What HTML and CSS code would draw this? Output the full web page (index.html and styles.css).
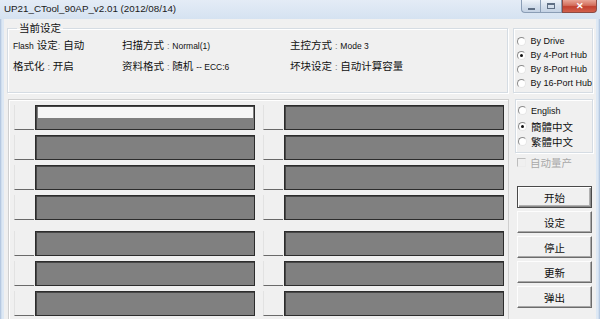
FILE: index.html
```html
<!DOCTYPE html>
<html lang="zh-CN">
<head>
<meta charset="utf-8">
<title>UP21_CTool_90AP_v2.01</title>
<link rel="stylesheet" href="styles.css">
</head>
<body>
<div class="window">
  <div class="titlebar">
    <span class="title">UP21_CTool_90AP_v2.01 (2012/08/14)</span>
    <div class="controls">
      <span class="ctl min"><i class="min-glyph"></i></span>
      <span class="ctl max"><i class="max-glyph"></i></span>
      <span class="ctl close">✕</span>
    </div>
  </div>
  <div class="client">
    <div class="top">
      <fieldset class="settings">
        <legend>当前设定</legend>
        <div class="info">
          <span><span class="l">Flash</span> 设定<span class="sep">:</span> 自动</span>
          <span>扫描方式 <span class="sep">:</span> <span class="l">Normal(1)</span></span>
          <span>主控方式 <span class="sep">:</span> <span class="l">Mode 3</span></span>
          <span>格式化 <span class="sep">:</span> 开启</span>
          <span>资料格式 <span class="sep">:</span> 随机 <span class="l">-- ECC:6</span></span>
          <span>坏块设定 <span class="sep">:</span> 自动计算容量</span>
        </div>
      </fieldset>
      <div class="box mode">
        <label class="radio"><i class="dot"></i><span class="l">By Drive</span></label>
        <label class="radio"><i class="dot on"></i><span class="l">By 4-Port Hub</span></label>
        <label class="radio"><i class="dot"></i><span class="l">By 8-Port Hub</span></label>
        <label class="radio"><i class="dot"></i><span class="l">By 16-Port Hub</span></label>
      </div>
    </div>
    <div class="bottom">
      <div class="ports">
        <div class="bank">
          <div class="row">
            <div class="cell"><span class="pbtn"></span><div class="bar"><div class="fill"></div></div></div>
            <div class="cell"><span class="pbtn"></span><div class="bar"></div></div>
          </div>
          <div class="row">
            <div class="cell"><span class="pbtn"></span><div class="bar"></div></div>
            <div class="cell"><span class="pbtn"></span><div class="bar"></div></div>
          </div>
          <div class="row">
            <div class="cell"><span class="pbtn"></span><div class="bar"></div></div>
            <div class="cell"><span class="pbtn"></span><div class="bar"></div></div>
          </div>
          <div class="row">
            <div class="cell"><span class="pbtn"></span><div class="bar"></div></div>
            <div class="cell"><span class="pbtn"></span><div class="bar"></div></div>
          </div>
        </div>
        <div class="bank">
          <div class="row">
            <div class="cell"><span class="pbtn"></span><div class="bar"></div></div>
            <div class="cell"><span class="pbtn"></span><div class="bar"></div></div>
          </div>
          <div class="row">
            <div class="cell"><span class="pbtn"></span><div class="bar"></div></div>
            <div class="cell"><span class="pbtn"></span><div class="bar"></div></div>
          </div>
          <div class="row">
            <div class="cell"><span class="pbtn"></span><div class="bar"></div></div>
            <div class="cell"><span class="pbtn"></span><div class="bar"></div></div>
          </div>
          <div class="row">
            <div class="cell"><span class="pbtn"></span><div class="bar"></div></div>
            <div class="cell"><span class="pbtn"></span><div class="bar"></div></div>
          </div>
        </div>
      </div>
      <div class="side">
        <div class="box lang">
          <label class="radio"><i class="dot"></i><span class="l">English</span></label>
          <label class="radio"><i class="dot on"></i><span class="c">簡體中文</span></label>
          <label class="radio"><i class="dot"></i><span class="c">繁體中文</span></label>
        </div>
        <label class="check"><i class="cbox"></i><span>自动量产</span></label>
        <div class="buttons">
          <button class="btn default">开始</button>
          <button class="btn">设定</button>
          <button class="btn">停止</button>
          <button class="btn">更新</button>
          <button class="btn">弹出</button>
        </div>
      </div>
    </div>
  </div>
</div>
</body>
</html>
```
FILE: styles.css
```css
* { box-sizing: border-box; }
html, body { margin: 0; padding: 0; }
body {
  width: 600px;
  height: 319px;
  overflow: hidden;
  background: #dbe6f3;
  font-family: "Liberation Sans", "Noto Sans CJK SC", sans-serif;
  font-size: 10px;
  color: #111;
}
.window {
  height: 319px;
  display: flex;
  flex-direction: column;
  background: linear-gradient(90deg, #a9bfdb 0, #dde8f4 2px, #dde8f4 598px, #a9bfdb 600px);
}
.titlebar {
  height: 19px;
  flex: none;
  display: flex;
  justify-content: space-between;
  align-items: flex-start;
  background: linear-gradient(#e4ecf6, #d5e2f1);
}
.title {
  font-family: "Liberation Sans", sans-serif;
  font-size: 9.8px;
  line-height: 17px;
  padding-left: 4px;
  color: #1a1a1a;
}
.controls {
  display: flex;
  margin-right: 3px;
}
.ctl {
  height: 13px;
  display: flex;
  align-items: center;
  justify-content: center;
  border: 1px solid #8a9db5;
  border-top: none;
  background: linear-gradient(#eef3f9, #d3deeb 55%, #c4d2e4);
}
.min { width: 19px; border-radius: 0 0 0 4px; border-right: none; }
.max { width: 22px; }
.close {
  width: 35px;
  border-color: #8d4b43;
  border-radius: 0 0 4px 0;
  background: linear-gradient(#e9a697, #d36e5c 45%, #c2412f 55%, #d2604c);
  color: #fff;
  font-size: 9px;
  font-weight: bold;
}
.min-glyph { width: 7px; height: 2px; border: 1px solid #5f6f84; margin-top: 5px; display: block; }
.max-glyph { width: 8px; height: 6px; border: 1px solid #5f6f84; border-top-width: 2px; display: block; }

.client {
  flex: 1;
  margin: 0 4px;
  padding: 3px 3px 0 3px;
  background: #f0f0f0;
  overflow: hidden;
}
.top {
  display: flex;
  gap: 5px;
}
.settings {
  width: 502px;
  height: 71px;
  margin: 0;
  padding: 0 0 0 5px;
  border: 1px solid #d5dce3;
  box-shadow: inset 1px 1px 0 #fff, 1px 1px 0 #fff;
  min-inline-size: 0;
}
.settings legend {
  font-size: 10.5px;
  line-height: 12px;
  padding: 0 2px;
  margin-left: 4px;
}
.info {
  display: grid;
  grid-template-columns: 109px 168px auto;
  grid-auto-rows: 21px;
  align-items: center;
  font-size: 10.5px;
  white-space: nowrap;
}
.l { font-size: 8.5px; }
.sep { color: #777; font-size: 9px; }

.box {
  border: 1px solid #d5dce3;
  box-shadow: inset 1px 1px 0 #fff, 1px 1px 0 #fff;
}
.mode {
  flex: 1;
  margin-top: 6px;
  height: 65px;
  padding: 5px 0 0 3px;
}
.radio {
  display: flex;
  align-items: center;
  height: 14px;
  white-space: nowrap;
}
.radio .l { font-size: 9px; }
.dot {
  width: 9px;
  height: 9px;
  flex: none;
  border-radius: 50%;
  background: #fff;
  border: 1px solid;
  border-color: #8c8c8c #e6e6e6 #e6e6e6 #8c8c8c;
  margin-right: 4px;
  position: relative;
}
.dot.on::after {
  content: "";
  position: absolute;
  left: 2px;
  top: 2px;
  width: 3px;
  height: 3px;
  border-radius: 50%;
  background: #111;
}

.bottom {
  display: flex;
  margin-top: 6px;
}
.ports {
  width: 501px;
  height: 240px;
  margin-left: 1px;
  border: 1px solid #cfcfcf;
  border-bottom: none;
  box-shadow: inset 1px 1px 0 #fff;
  padding: 5px 0 0 5px;
  display: flex;
  flex-direction: column;
  gap: 11px;
}
.bank {
  display: flex;
  flex-direction: column;
  gap: 5px;
}
.row {
  display: flex;
  gap: 8px;
  height: 25px;
}
.cell {
  display: flex;
  gap: 1px;
}
.pbtn {
  width: 20px;
  height: 25px;
  background: #f0f0f0;
  border-left: 1px solid #e2e2e2;
  border-bottom: 1px solid #6a6a6a;
}
.bar {
  width: 220px;
  height: 25px;
  background: #808080;
  border: 1px solid #2c2c2c;
  box-shadow: inset 1px 1px 0 #474747;
  padding: 1px 1px 0 2px;
}
.fill {
  height: 11px;
  background: #f6f6f6;
}

.side {
  margin-left: 6px;
  width: 78px;
}
.lang {
  height: 54px;
  padding: 3px 0 0 2px;
}
.lang .radio { height: 15.5px; }
.lang .radio .c { font-size: 10.5px; }
.check {
  display: flex;
  align-items: center;
  height: 12px;
  margin-top: 3px;
  padding-left: 2px;
  color: #a8a8a8;
  font-size: 10.5px;
}
.cbox {
  width: 9px;
  height: 9px;
  border: 1px solid;
  border-color: #bdbdbd #ececec #ececec #bdbdbd;
  margin-right: 4px;
}
.buttons {
  margin-top: 18px;
  margin-left: 2px;
  display: flex;
  flex-direction: column;
  gap: 3px;
}
.btn {
  width: 75px;
  height: 22px;
  padding: 0;
  font-family: "Liberation Sans", "Noto Sans CJK SC", sans-serif;
  font-size: 10.5px;
  color: #111;
  background: #f0f0f0;
  border: 1px solid;
  border-color: #fdfdfd #6c6c6c #6c6c6c #fdfdfd;
  box-shadow: inset -1px -1px 0 #a8a8a8;
}
.btn.default {
  outline: 1px solid #4a4a4a;
  outline-offset: -1px;
  border-color: #4a4a4a;
  box-shadow: inset 1px 1px 0 #fff, inset -1px -1px 0 #8a8a8a, inset -2px -2px 0 #b0b0b0;
}
```
